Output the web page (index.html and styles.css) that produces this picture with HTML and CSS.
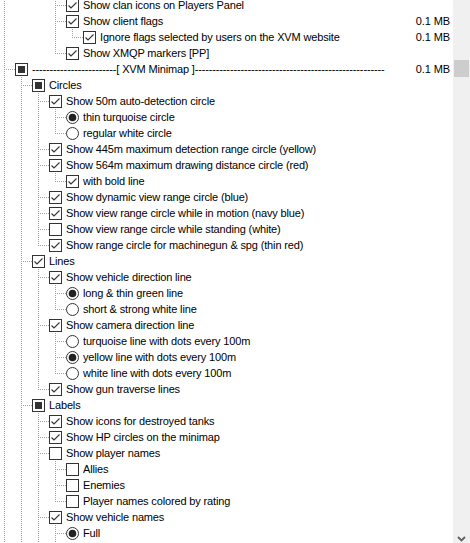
FILE: index.html
```html
<!DOCTYPE html>
<html>
<head>
<meta charset="utf-8">
<link rel="stylesheet" href="styles.css">
</head>
<body>
<svg class="defs" width="0" height="0">
  <defs>
    <symbol id="cb-off" viewBox="0 0 13 13"><rect x="0.5" y="0.5" width="12" height="12" fill="#fff" stroke="#333"/></symbol>
    <symbol id="cb-on" viewBox="0 0 13 13"><rect x="0.5" y="0.5" width="12" height="12" fill="#fff" stroke="#333"/><polyline points="2.5,6.5 5,9 10.5,3.5" fill="none" stroke="#333" stroke-width="1.1"/></symbol>
    <symbol id="cb-part" viewBox="0 0 13 13"><rect x="0.5" y="0.5" width="12" height="12" fill="#fff" stroke="#333"/><rect x="3" y="3" width="7" height="7" fill="#333"/></symbol>
    <symbol id="rb-off" viewBox="0 0 13 13"><circle cx="6.5" cy="6.5" r="6" fill="#fff" stroke="#333"/></symbol>
    <symbol id="rb-on" viewBox="0 0 13 13"><circle cx="6.5" cy="6.5" r="6" fill="#fff" stroke="#333"/><circle cx="6.5" cy="6.5" r="3.8" fill="#222"/></symbol>
  </defs>
</svg>
<div class="window">
  <div class="tree">
    <div class="row"><span class="g v"></span><span class="g"></span><span class="g"></span><span class="g t"></span><svg class="ctl"><use href="#cb-on"/></svg><span class="lbl">Show clan icons on Players Panel</span><span class="sz"></span></div>
    <div class="row"><span class="g v"></span><span class="g"></span><span class="g"></span><span class="g t"></span><svg class="ctl"><use href="#cb-on"/></svg><span class="lbl">Show client flags</span><span class="sz">0.1 MB</span></div>
    <div class="row"><span class="g v"></span><span class="g"></span><span class="g"></span><span class="g v"></span><span class="g l"></span><svg class="ctl"><use href="#cb-on"/></svg><span class="lbl">Ignore flags selected by users on the XVM website</span><span class="sz">0.1 MB</span></div>
    <div class="row"><span class="g v"></span><span class="g"></span><span class="g"></span><span class="g l"></span><svg class="ctl"><use href="#cb-on"/></svg><span class="lbl">Show XMQP markers [PP]</span><span class="sz"></span></div>
    <div class="row"><span class="g t"></span><svg class="ctl"><use href="#cb-part"/></svg><span class="lbl">------------------------[ XVM Minimap ]------------------------------------------------------</span><span class="sz">0.1 MB</span></div>
    <div class="row"><span class="g v"></span><span class="g t"></span><svg class="ctl"><use href="#cb-part"/></svg><span class="lbl">Circles</span><span class="sz"></span></div>
    <div class="row"><span class="g v"></span><span class="g v"></span><span class="g t"></span><svg class="ctl"><use href="#cb-on"/></svg><span class="lbl">Show 50m auto-detection circle</span><span class="sz"></span></div>
    <div class="row"><span class="g v"></span><span class="g v"></span><span class="g v"></span><span class="g t"></span><svg class="ctl"><use href="#rb-on"/></svg><span class="lbl">thin turquoise circle</span><span class="sz"></span></div>
    <div class="row"><span class="g v"></span><span class="g v"></span><span class="g v"></span><span class="g l"></span><svg class="ctl"><use href="#rb-off"/></svg><span class="lbl">regular white circle</span><span class="sz"></span></div>
    <div class="row"><span class="g v"></span><span class="g v"></span><span class="g t"></span><svg class="ctl"><use href="#cb-on"/></svg><span class="lbl">Show 445m maximum detection range circle (yellow)</span><span class="sz"></span></div>
    <div class="row"><span class="g v"></span><span class="g v"></span><span class="g t"></span><svg class="ctl"><use href="#cb-on"/></svg><span class="lbl">Show 564m maximum drawing distance circle (red)</span><span class="sz"></span></div>
    <div class="row"><span class="g v"></span><span class="g v"></span><span class="g v"></span><span class="g l"></span><svg class="ctl"><use href="#cb-on"/></svg><span class="lbl">with bold line</span><span class="sz"></span></div>
    <div class="row"><span class="g v"></span><span class="g v"></span><span class="g t"></span><svg class="ctl"><use href="#cb-on"/></svg><span class="lbl">Show dynamic view range circle (blue)</span><span class="sz"></span></div>
    <div class="row"><span class="g v"></span><span class="g v"></span><span class="g t"></span><svg class="ctl"><use href="#cb-on"/></svg><span class="lbl">Show view range circle while in motion (navy blue)</span><span class="sz"></span></div>
    <div class="row"><span class="g v"></span><span class="g v"></span><span class="g t"></span><svg class="ctl"><use href="#cb-off"/></svg><span class="lbl">Show view range circle while standing (white)</span><span class="sz"></span></div>
    <div class="row"><span class="g v"></span><span class="g v"></span><span class="g l"></span><svg class="ctl"><use href="#cb-on"/></svg><span class="lbl">Show range circle for machinegun &amp; spg (thin red)</span><span class="sz"></span></div>
    <div class="row"><span class="g v"></span><span class="g t"></span><svg class="ctl"><use href="#cb-on"/></svg><span class="lbl">Lines</span><span class="sz"></span></div>
    <div class="row"><span class="g v"></span><span class="g v"></span><span class="g t"></span><svg class="ctl"><use href="#cb-on"/></svg><span class="lbl">Show vehicle direction line</span><span class="sz"></span></div>
    <div class="row"><span class="g v"></span><span class="g v"></span><span class="g v"></span><span class="g t"></span><svg class="ctl"><use href="#rb-on"/></svg><span class="lbl">long &amp; thin green line</span><span class="sz"></span></div>
    <div class="row"><span class="g v"></span><span class="g v"></span><span class="g v"></span><span class="g l"></span><svg class="ctl"><use href="#rb-off"/></svg><span class="lbl">short &amp; strong white line</span><span class="sz"></span></div>
    <div class="row"><span class="g v"></span><span class="g v"></span><span class="g t"></span><svg class="ctl"><use href="#cb-on"/></svg><span class="lbl">Show camera direction line</span><span class="sz"></span></div>
    <div class="row"><span class="g v"></span><span class="g v"></span><span class="g v"></span><span class="g t"></span><svg class="ctl"><use href="#rb-off"/></svg><span class="lbl">turquoise line with dots every 100m</span><span class="sz"></span></div>
    <div class="row"><span class="g v"></span><span class="g v"></span><span class="g v"></span><span class="g t"></span><svg class="ctl"><use href="#rb-on"/></svg><span class="lbl">yellow line with dots every 100m</span><span class="sz"></span></div>
    <div class="row"><span class="g v"></span><span class="g v"></span><span class="g v"></span><span class="g l"></span><svg class="ctl"><use href="#rb-off"/></svg><span class="lbl">white line with dots every 100m</span><span class="sz"></span></div>
    <div class="row"><span class="g v"></span><span class="g v"></span><span class="g l"></span><svg class="ctl"><use href="#cb-on"/></svg><span class="lbl">Show gun traverse lines</span><span class="sz"></span></div>
    <div class="row"><span class="g v"></span><span class="g t"></span><svg class="ctl"><use href="#cb-part"/></svg><span class="lbl">Labels</span><span class="sz"></span></div>
    <div class="row"><span class="g v"></span><span class="g v"></span><span class="g t"></span><svg class="ctl"><use href="#cb-on"/></svg><span class="lbl">Show icons for destroyed tanks</span><span class="sz"></span></div>
    <div class="row"><span class="g v"></span><span class="g v"></span><span class="g t"></span><svg class="ctl"><use href="#cb-on"/></svg><span class="lbl">Show HP circles on the minimap</span><span class="sz"></span></div>
    <div class="row"><span class="g v"></span><span class="g v"></span><span class="g t"></span><svg class="ctl"><use href="#cb-off"/></svg><span class="lbl">Show player names</span><span class="sz"></span></div>
    <div class="row"><span class="g v"></span><span class="g v"></span><span class="g v"></span><span class="g t"></span><svg class="ctl"><use href="#cb-off"/></svg><span class="lbl">Allies</span><span class="sz"></span></div>
    <div class="row"><span class="g v"></span><span class="g v"></span><span class="g v"></span><span class="g t"></span><svg class="ctl"><use href="#cb-off"/></svg><span class="lbl">Enemies</span><span class="sz"></span></div>
    <div class="row"><span class="g v"></span><span class="g v"></span><span class="g v"></span><span class="g l"></span><svg class="ctl"><use href="#cb-off"/></svg><span class="lbl">Player names colored by rating</span><span class="sz"></span></div>
    <div class="row"><span class="g v"></span><span class="g v"></span><span class="g t"></span><svg class="ctl"><use href="#cb-on"/></svg><span class="lbl">Show vehicle names</span><span class="sz"></span></div>
    <div class="row"><span class="g v"></span><span class="g v"></span><span class="g v"></span><span class="g t"></span><svg class="ctl"><use href="#rb-on"/></svg><span class="lbl">Full</span><span class="sz"></span></div>
    <div class="row"><span class="g v"></span><span class="g v"></span><span class="g v"></span><span class="g v"></span></div>
  </div>
  <div class="scrollbar">
    <div class="thumb"></div>
    <div class="track"></div>
    <div class="arrow-down">
      <svg width="9" height="6" viewBox="0 0 9 6"><polyline points="1,1 4.5,4.5 8,1" fill="none" stroke="#606060" stroke-width="1.8"/></svg>
    </div>
  </div>
</div>
</body>
</html>
```

FILE: styles.css
```css
html, body {
  margin: 0;
  padding: 0;
  background: #ffffff;
}

body {
  width: 470px;
  height: 543px;
  overflow: hidden;
  font-family: "Liberation Sans", Arial, sans-serif;
  font-size: 11px;
  color: #000;
}

.defs {
  position: absolute;
  width: 0;
  height: 0;
}

.window {
  display: flex;
  height: 543px;
}

.tree {
  flex: 1;
  min-width: 0;
  margin-top: -3px;
  margin-left: -2px;
  display: flex;
  flex-direction: column;
}

.row {
  display: flex;
  align-items: center;
  height: 16px;
  flex: none;
  white-space: nowrap;
}

.g {
  flex: none;
  width: 17px;
  height: 16px;
}

.g.v {
  background: repeating-linear-gradient(to bottom, #a0a0a0 0 1px, transparent 1px 2px) no-repeat 6px 0 / 1px 16px;
}

.g.t {
  background:
    repeating-linear-gradient(to bottom, #a0a0a0 0 1px, transparent 1px 2px) no-repeat 6px 0 / 1px 16px,
    repeating-linear-gradient(to right, #a0a0a0 0 1px, transparent 1px 2px) no-repeat 8px 8px / 9px 1px;
}

.g.l {
  background:
    repeating-linear-gradient(to bottom, #a0a0a0 0 1px, transparent 1px 2px) no-repeat 6px 0 / 1px 9px,
    repeating-linear-gradient(to right, #a0a0a0 0 1px, transparent 1px 2px) no-repeat 8px 8px / 9px 1px;
}

.ctl {
  flex: none;
  width: 13px;
  height: 13px;
  margin-right: 4px;
}

.lbl {
  flex: 1;
  min-width: 0;
  overflow: hidden;
  letter-spacing: -0.15px;
  line-height: 16px;
}

.sz {
  flex: none;
  margin-right: 3px;
  letter-spacing: -0.1px;
  line-height: 16px;
}

.scrollbar {
  flex: none;
  width: 17px;
  background: #f0f0f0;
  display: flex;
  flex-direction: column;
}

.thumb {
  flex: none;
  height: 17px;
  margin: 60px 1px 0;
  background: #cdcdcd;
}

.track {
  flex: 1;
}

.arrow-down {
  flex: none;
  height: 17px;
  margin-bottom: -4px;
  display: flex;
  align-items: center;
  justify-content: center;
}
```
